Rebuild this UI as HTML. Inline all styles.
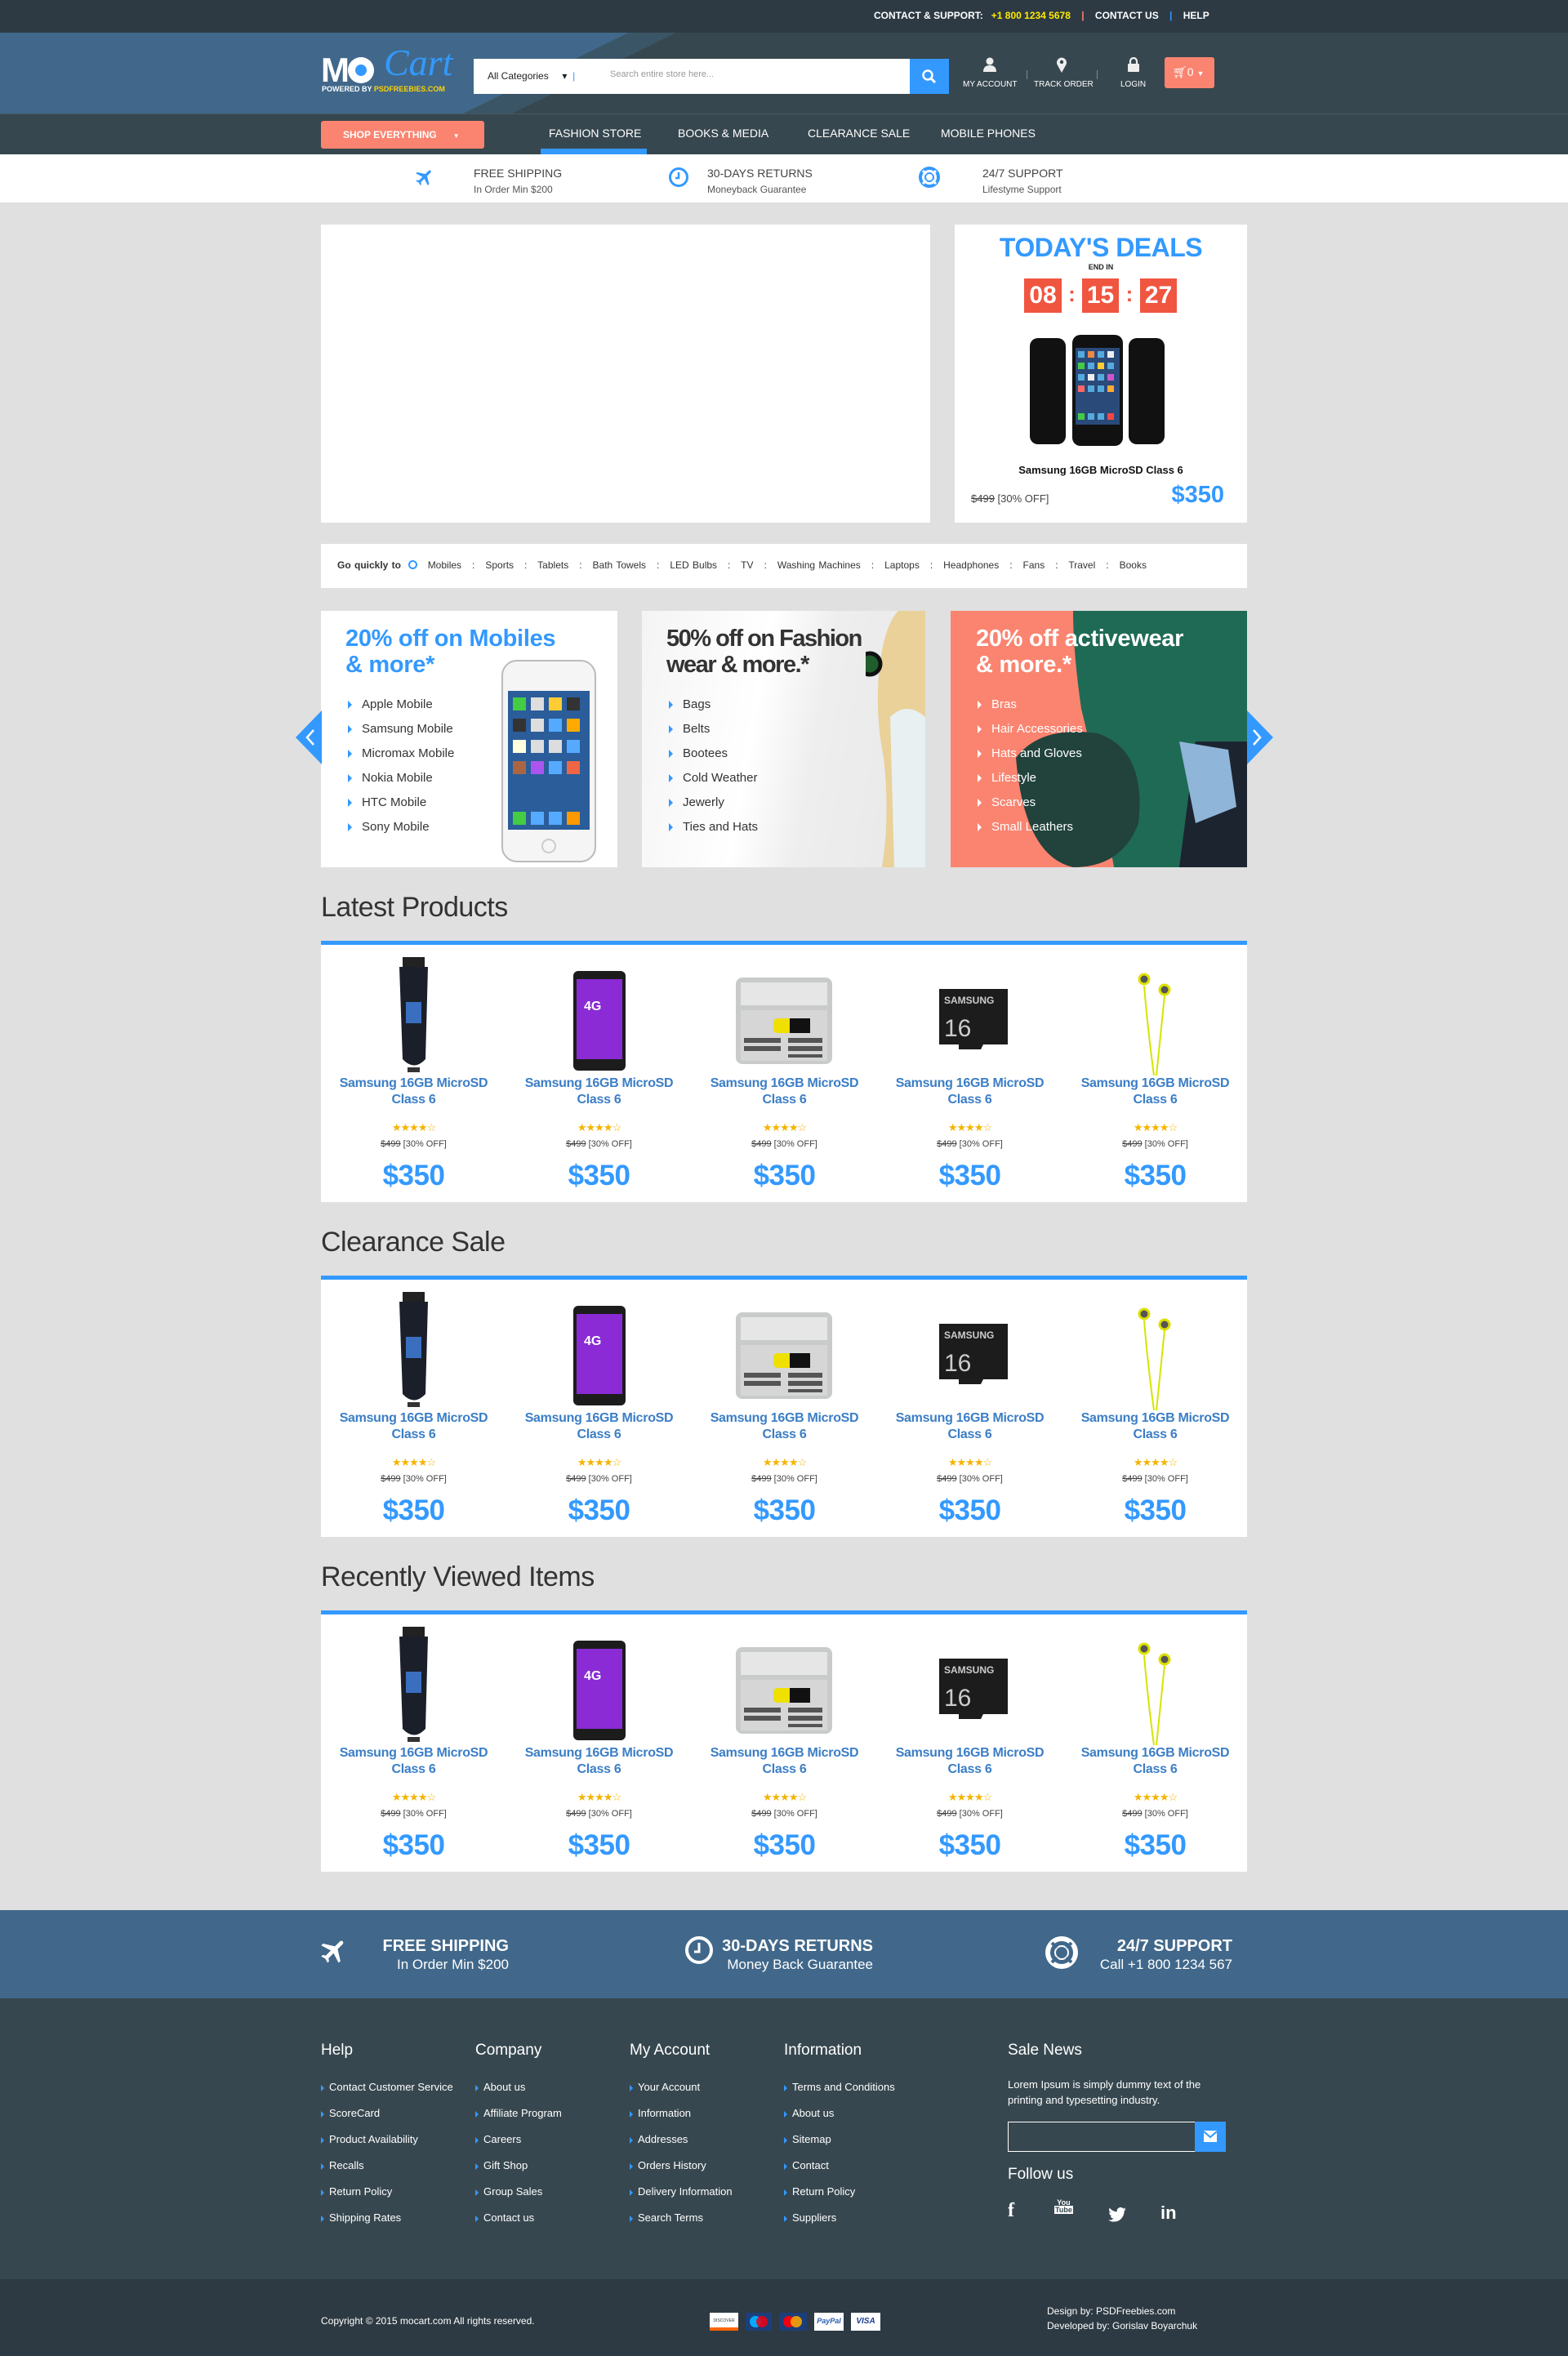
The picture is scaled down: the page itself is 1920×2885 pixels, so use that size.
<!DOCTYPE html>
<html><head><meta charset="utf-8">
<style>
*{margin:0;padding:0;box-sizing:border-box}
body{width:1920px;height:2885px;position:relative;background:#e0e0e0;font-family:"Liberation Sans Narrow","Liberation Sans",sans-serif;color:#333;overflow:hidden}
.a{position:absolute}
.w{color:#fff}
.blue{color:#3399ff}
.ctr{text-align:center}
.box{background:#fff}
ul{list-style:none}
.arr{display:inline-block;width:0;height:0;border-top:5px solid transparent;border-bottom:5px solid transparent;border-left:5px solid #3399ff;margin-right:12px;vertical-align:middle}
.prow{position:absolute;left:393px;width:1134px;height:320px;background:#fff;border-top:5px solid #3399ff}
.prow .p{position:absolute;top:0;width:227px;height:315px;text-align:center}
.p .nm{position:absolute;top:160px;left:0;width:227px;font-size:16px;line-height:20px;font-weight:bold;color:#3b7ec6;letter-spacing:-0.3px}
.p .st{position:absolute;top:216px;left:0;width:227px;font-size:13px;color:#f5b400;letter-spacing:-1px}
.p .op{position:absolute;top:238px;left:0;width:227px;font-size:11px;color:#444}
.p .op s{color:#444}
.p .pr{position:absolute;top:263px;left:0;width:227px;font-size:35px;font-weight:bold;color:#3399ff;letter-spacing:-0.5px}
.p .im{position:absolute;left:0;top:10px;width:227px;height:150px}
.stitle{position:absolute;left:393px;font-size:34px;color:#333;font-family:"Liberation Sans",sans-serif;letter-spacing:-0.5px}
.fcol h4{font-weight:normal;font-size:19px;color:#fff;margin-bottom:26px}
.fcol li{font-size:13px;color:#fff;height:32px}
.fcol .arr{border-left-color:#3399ff;margin-right:6px;border-top-width:4px;border-bottom-width:4px;border-left-width:4px}
</style></head><body>

<div class="a" style="left:0;top:0;width:1920px;height:40px;background:#2d3a44"></div>
<div class="a w" style="left:1070px;top:12px;font-size:12px;font-weight:bold;white-space:nowrap">CONTACT &amp; SUPPORT: &nbsp;&nbsp;<span style="color:#ffea00">+1 800 1234 5678</span> &nbsp;&nbsp;&nbsp;<span style="color:#fa8470">|</span>&nbsp;&nbsp;&nbsp; CONTACT US &nbsp;&nbsp;&nbsp;<span style="color:#3399ff">|</span>&nbsp;&nbsp;&nbsp; HELP</div>

<svg class="a" style="left:0;top:40px" width="1920" height="100">
<rect width="1920" height="100" fill="#37474f"/>
<polygon points="0,0 828,0 625,100 0,100" fill="#3a5566"/>
<polygon points="0,0 770,0 565,100 0,100" fill="#41688a"/>
<rect y="99" width="1920" height="1" fill="#4a5a64"/>
</svg>
<div class="a w" style="left:393px;top:62px;font-size:42px;font-weight:bold;font-family:'Liberation Sans',sans-serif;letter-spacing:-2px">M<span style="display:inline-block;width:32px;height:32px;border-radius:50%;background:#fff;position:relative;top:2px"><span style="position:absolute;left:9px;top:9px;width:14px;height:14px;border-radius:50%;background:#3399ff"></span></span></div>
<div class="a" style="left:470px;top:50px;font-size:46px;font-style:italic;color:#3399ff;font-family:'Liberation Serif',serif">Cart</div>
<div class="a w" style="left:394px;top:104px;font-size:9px;font-weight:bold;font-family:'Liberation Sans',sans-serif">POWERED BY <span style="color:#ffd200">PSDFREEBIES.COM</span></div>
<div class="a" style="left:580px;top:72px;width:534px;height:43px;background:#fff"></div>
<div class="a" style="left:597px;top:86px;font-size:12px;color:#222">All Categories &nbsp;&nbsp;&nbsp;&nbsp;&#9662; <span style="color:#3399ff">&nbsp;|</span></div>
<div class="a" style="left:747px;top:85px;font-size:11px;color:#999">Search entire store here...</div>
<div class="a" style="left:1114px;top:72px;width:48px;height:43px;background:#3399ff"></div>
<svg class="a" style="left:1128px;top:84px" width="20" height="20"><circle cx="8" cy="8" r="5.5" stroke="#fff" stroke-width="2.5" fill="none"/><line x1="12" y1="12" x2="17" y2="17" stroke="#fff" stroke-width="3"/></svg>
<svg class="a" style="left:1203px;top:70px" width="18" height="18"><circle cx="9" cy="5" r="4.5" fill="#eee"/><path d="M1 18 Q1 10 9 10 Q17 10 17 18Z" fill="#eee"/></svg>
<svg class="a" style="left:1293px;top:70px" width="14" height="19"><path d="M7 19 L1.5 9 A6 6 0 1 1 12.5 9Z" fill="#eee"/><circle cx="7" cy="6" r="2.2" fill="#37474f"/></svg>
<svg class="a" style="left:1381px;top:70px" width="14" height="18"><path d="M3 8 V5 A4 4 0 0 1 11 5 V8" stroke="#eee" stroke-width="2.2" fill="none"/><rect x="0" y="8" width="14" height="10" rx="1" fill="#eee"/></svg>
<div class="a" style="left:1257px;top:86px;width:1px;height:11px;background:#7a8c96"></div>
<div class="a" style="left:1343px;top:86px;width:1px;height:11px;background:#7a8c96"></div>
<div class="a w" style="left:1179px;top:98px;font-size:10px;font-family:'Liberation Sans',sans-serif">MY ACCOUNT</div>
<div class="a w" style="left:1266px;top:98px;font-size:10px;font-family:'Liberation Sans',sans-serif">TRACK ORDER</div>
<div class="a w" style="left:1372px;top:98px;font-size:10px;font-family:'Liberation Sans',sans-serif">LOGIN</div>
<div class="a w" style="left:1426px;top:70px;width:61px;height:38px;background:#fa8470;border-radius:3px;font-size:14px;padding:10px 0 0 10px">&#x1F6D2;&#xFE0E;0 <span style="font-size:9px">&#9660;</span></div>

<div class="a" style="left:0;top:140px;width:1920px;height:49px;background:#37474f"></div>
<div class="a w" style="left:393px;top:148px;width:200px;height:34px;background:#fa8470;border-radius:3px;font-size:12px;font-weight:bold;padding-top:10px;padding-left:27px">SHOP EVERYTHING &nbsp;&nbsp;&nbsp;&nbsp;&nbsp;<span style="font-size:8px">&#9660;</span></div>
<div class="a w" style="left:672px;top:155px;font-size:14px">FASHION STORE</div>
<div class="a w" style="left:830px;top:155px;font-size:14px">BOOKS &amp; MEDIA</div>
<div class="a w" style="left:989px;top:155px;font-size:14px">CLEARANCE SALE</div>
<div class="a w" style="left:1152px;top:155px;font-size:14px">MOBILE PHONES</div>
<div class="a" style="left:662px;top:182px;width:130px;height:7px;background:#3399ff"></div>

<div class="a" style="left:0;top:189px;width:1920px;height:60px;background:#fff;border-bottom:1px solid #ddd"></div>
<svg class="a" style="left:506px;top:204px" width="28" height="26" viewBox="0 0 24 24"><path d="M21 16v-2l-8-5V3.5c0-.8-.7-1.5-1.5-1.5S10 2.7 10 3.5V9l-8 5v2l8-2.5V19l-2 1.5V22l3.5-1 3.5 1v-1.5L13 19v-5.5z" fill="#3399ff" transform="rotate(45 12 12)"/></svg>
<div class="a" style="left:580px;top:204px;font-size:14px;color:#444">FREE SHIPPING</div>
<div class="a" style="left:580px;top:225px;font-size:12px;color:#555">In Order Min $200</div>
<svg class="a" style="left:818px;top:204px" width="26" height="26"><circle cx="13" cy="13" r="10.5" stroke="#3399ff" stroke-width="3" fill="none"/><path d="M13 7V14H9" stroke="#3399ff" stroke-width="2.5" fill="none"/></svg>
<div class="a" style="left:866px;top:204px;font-size:14px;color:#444">30-DAYS RETURNS</div>
<div class="a" style="left:866px;top:225px;font-size:12px;color:#555">Moneyback Guarantee</div>
<svg class="a" style="left:1124px;top:202px" width="28" height="30"><circle cx="14" cy="15" r="11" stroke="#3399ff" stroke-width="4" fill="none"/><circle cx="14" cy="15" r="5" stroke="#3399ff" stroke-width="2" fill="none"/><path d="M6 7l4 4M22 7l-4 4M6 23l4-4M22 23l-4-4" stroke="#fff" stroke-width="3"/></svg>
<div class="a" style="left:1203px;top:204px;font-size:14px;color:#444">24/7 SUPPORT</div>
<div class="a" style="left:1203px;top:225px;font-size:12px;color:#555">Lifestyme Support</div>

<div class="a box" style="left:393px;top:275px;width:746px;height:365px"></div>
<div class="a box" style="left:1169px;top:275px;width:358px;height:365px"></div>
<div class="a ctr" style="left:1169px;top:285px;width:358px;font-size:32px;font-weight:bold;color:#3399ff;letter-spacing:-0.5px">TODAY'S DEALS</div>
<div class="a ctr" style="left:1169px;top:322px;width:358px;font-size:9px;font-weight:bold;color:#222">END IN</div>
<div class="a w ctr" style="left:1254px;top:341px;width:46px;height:42px;background:#f05540;font-size:30px;font-weight:bold;line-height:42px">08</div>
<div class="a ctr" style="left:1300px;top:345px;width:25px;font-size:26px;font-weight:bold;color:#f05540">:</div>
<div class="a w ctr" style="left:1325px;top:341px;width:45px;height:42px;background:#f05540;font-size:30px;font-weight:bold;line-height:42px">15</div>
<div class="a ctr" style="left:1370px;top:345px;width:26px;font-size:26px;font-weight:bold;color:#f05540">:</div>
<div class="a w ctr" style="left:1396px;top:341px;width:45px;height:42px;background:#f05540;font-size:30px;font-weight:bold;line-height:42px">27</div>
<svg class="a" style="left:1258px;top:408px" width="180" height="140">
<rect x="3" y="6" width="44" height="130" rx="10" fill="#111"/><rect x="124" y="6" width="44" height="130" rx="10" fill="#111"/>
<rect x="55" y="2" width="62" height="136" rx="10" fill="#111"/><rect x="59" y="18" width="54" height="94" fill="#2a4a7a"/>
<g fill="#5ad">
<rect x="62" y="22" width="8" height="8"/><rect x="74" y="22" width="8" height="8" fill="#e84"/><rect x="86" y="22" width="8" height="8"/><rect x="98" y="22" width="8" height="8" fill="#eee"/>
<rect x="62" y="36" width="8" height="8" fill="#4c4"/><rect x="74" y="36" width="8" height="8"/><rect x="86" y="36" width="8" height="8" fill="#fc3"/><rect x="98" y="36" width="8" height="8"/>
<rect x="62" y="50" width="8" height="8"/><rect x="74" y="50" width="8" height="8" fill="#eee"/><rect x="86" y="50" width="8" height="8"/><rect x="98" y="50" width="8" height="8" fill="#c5c"/>
<rect x="62" y="64" width="8" height="8" fill="#f66"/><rect x="74" y="64" width="8" height="8"/><rect x="86" y="64" width="8" height="8"/><rect x="98" y="64" width="8" height="8" fill="#fa3"/>
<rect x="62" y="98" width="8" height="8" fill="#4c4"/><rect x="74" y="98" width="8" height="8"/><rect x="86" y="98" width="8" height="8"/><rect x="98" y="98" width="8" height="8" fill="#f44"/>
</g></svg>
<div class="a ctr" style="left:1169px;top:568px;width:358px;font-size:13px;font-weight:bold;color:#111">Samsung 16GB MicroSD Class 6</div>
<div class="a" style="left:1189px;top:603px;font-size:13px;color:#444"><s>$499</s> [30% OFF]</div>
<div class="a" style="left:1420px;top:590px;width:79px;text-align:right;font-size:29px;font-weight:bold;color:#3399ff">$350</div>

<div class="a box" style="left:393px;top:666px;width:1134px;height:54px"></div>
<div class="a" style="left:413px;top:685px;font-size:12px;color:#333;white-space:nowrap;word-spacing:1px"><b>Go quickly to</b> &nbsp;<span style="display:inline-block;width:11px;height:11px;border-radius:50%;border:2px solid #3399ff;vertical-align:-1px"></span>&nbsp;&nbsp; Mobiles &nbsp;&nbsp;:&nbsp;&nbsp; Sports &nbsp;&nbsp;:&nbsp;&nbsp; Tablets &nbsp;&nbsp;:&nbsp;&nbsp; Bath Towels &nbsp;&nbsp;:&nbsp;&nbsp; LED Bulbs &nbsp;&nbsp;:&nbsp;&nbsp; TV &nbsp;&nbsp;:&nbsp;&nbsp; Washing Machines &nbsp;&nbsp;:&nbsp;&nbsp; Laptops &nbsp;&nbsp;:&nbsp;&nbsp; Headphones &nbsp;&nbsp;:&nbsp;&nbsp; Fans &nbsp;&nbsp;:&nbsp;&nbsp; Travel &nbsp;&nbsp;:&nbsp;&nbsp; Books</div>

<div class="a box" style="left:393px;top:748px;width:363px;height:314px"></div>
<div class="a" style="left:423px;top:766px;font-size:29px;line-height:32px;font-weight:bold;color:#3399ff;letter-spacing:-0.3px">20% off on Mobiles<br>&amp; more*</div>
<svg class="a" style="left:614px;top:808px" width="116" height="250"><rect x="1" y="1" width="114" height="246" rx="18" fill="#f5f5f5" stroke="#bbb" stroke-width="2"/><rect x="8" y="38" width="100" height="170" fill="#2a5d9a"/><g fill="#ddd"><rect x="14" y="46" width="16" height="16" fill="#4c4"/><rect x="36" y="46" width="16" height="16"/><rect x="58" y="46" width="16" height="16" fill="#fc3"/><rect x="80" y="46" width="16" height="16" fill="#333"/><rect x="14" y="72" width="16" height="16" fill="#333"/><rect x="36" y="72" width="16" height="16"/><rect x="58" y="72" width="16" height="16" fill="#5af"/><rect x="80" y="72" width="16" height="16" fill="#fa0"/><rect x="14" y="98" width="16" height="16" fill="#ffd"/><rect x="36" y="98" width="16" height="16"/><rect x="58" y="98" width="16" height="16"/><rect x="80" y="98" width="16" height="16" fill="#5af"/><rect x="14" y="124" width="16" height="16" fill="#a64"/><rect x="36" y="124" width="16" height="16" fill="#a5e"/><rect x="58" y="124" width="16" height="16" fill="#5af"/><rect x="80" y="124" width="16" height="16" fill="#e64"/><rect x="14" y="186" width="16" height="16" fill="#4c4"/><rect x="36" y="186" width="16" height="16" fill="#5af"/><rect x="58" y="186" width="16" height="16" fill="#5af"/><rect x="80" y="186" width="16" height="16" fill="#f90"/></g><circle cx="58" cy="228" r="8" fill="none" stroke="#ccc" stroke-width="2"/></svg>
<ul class="a" style="left:426px;top:848px;font-size:15px;line-height:30px;color:#333">
<li><span class="arr"></span>Apple Mobile</li><li><span class="arr"></span>Samsung Mobile</li><li><span class="arr"></span>Micromax Mobile</li><li><span class="arr"></span>Nokia Mobile</li><li><span class="arr"></span>HTC Mobile</li><li><span class="arr"></span>Sony Mobile</li></ul>

<div class="a" style="left:786px;top:748px;width:347px;height:314px;background:linear-gradient(100deg,#f4f4f4 0%,#fff 40%,#eee 60%,#e8e8e8 100%)"></div>
<svg class="a" style="left:1060px;top:748px" width="73" height="314"><path d="M40 0 H73 V314 H20 Q30 250 22 180 Q10 120 18 60 Q25 15 40 0Z" fill="#e9d199"/><path d="M30 130 Q50 110 73 130 V314 H35Z" fill="#e8f0f2"/><circle cx="5" cy="65" r="13" fill="#1f5e2c" stroke="#111" stroke-width="5"/></svg>
<div class="a" style="left:816px;top:766px;font-size:29px;line-height:32px;font-weight:bold;color:#333;letter-spacing:-1.5px">50% off on Fashion<br>wear &amp; more.*</div>
<ul class="a" style="left:819px;top:848px;font-size:15px;line-height:30px;color:#333">
<li><span class="arr"></span>Bags</li><li><span class="arr"></span>Belts</li><li><span class="arr"></span>Bootees</li><li><span class="arr"></span>Cold Weather</li><li><span class="arr"></span>Jewerly</li><li><span class="arr"></span>Ties and Hats</li></ul>

<div class="a" style="left:1164px;top:748px;width:363px;height:314px;background:#fa8470;overflow:hidden">
<svg width="363" height="314"><path d="M150 0 H363 V314 H200 Q180 200 160 120 Q150 50 150 0Z" fill="#1f6a55"/><path d="M300 160 H363 V314 H280Z" fill="#1c2430"/><path d="M280 160 L340 170 L350 240 L300 260Z" fill="#8fb5d8"/><path d="M80 180 Q110 140 180 150 Q240 170 230 260 Q210 314 150 314 Q90 300 80 180Z" fill="#21433c"/></svg></div>
<div class="a w" style="left:1195px;top:766px;font-size:29px;line-height:32px;font-weight:bold;letter-spacing:-0.3px">20% off activewear<br>&amp; more.*</div>
<ul class="a w" style="left:1197px;top:848px;font-size:15px;line-height:30px">
<li><span class="arr" style="border-left-color:#fff"></span>Bras</li><li><span class="arr" style="border-left-color:#fff"></span>Hair Accessories</li><li><span class="arr" style="border-left-color:#fff"></span>Hats and Gloves</li><li><span class="arr" style="border-left-color:#fff"></span>Lifestyle</li><li><span class="arr" style="border-left-color:#fff"></span>Scarves</li><li><span class="arr" style="border-left-color:#fff"></span>Small Leathers</li></ul>
<svg class="a" style="left:362px;top:870px" width="32" height="66"><path d="M32 0 L0 33 L32 66Z" fill="#3399ff"/><path d="M22 24 L14 33 L22 42" stroke="#fff" stroke-width="2.5" fill="none"/></svg>
<svg class="a" style="left:1527px;top:870px" width="32" height="66"><path d="M0 0 L32 33 L0 66Z" fill="#3399ff"/><path d="M8 24 L16 33 L8 42" stroke="#fff" stroke-width="2.5" fill="none"/></svg>

<svg width="0" height="0" style="position:absolute">
<defs>
<g id="i1"><rect x="100" y="5" width="27" height="12" fill="#222"/><path d="M96 17 H131 L128 130 Q114 145 100 130Z" fill="#1b1f2a"/><rect x="104" y="60" width="19" height="26" fill="#3a6fc0"/><rect x="106" y="140" width="15" height="6" fill="#333"/></g>
<g id="i2"><rect x="82" y="22" width="64" height="122" rx="6" fill="#1c1c1c"/><rect x="86" y="32" width="56" height="98" fill="#8a2bd6"/><text x="95" y="70" fill="#fff" font-size="16" font-weight="bold" font-family="Liberation Sans">4G</text></g>
<g id="i3"><rect x="54" y="30" width="118" height="106" rx="8" fill="#c9cbcb"/><rect x="60" y="36" width="106" height="28" fill="#e6e6e6"/><rect x="60" y="70" width="106" height="62" fill="#d6d6d6"/><rect x="100" y="80" width="45" height="18" rx="5" fill="#f0e000"/><rect x="120" y="80" width="25" height="18" fill="#111"/><g fill="#555"><rect x="64" y="104" width="45" height="6"/><rect x="64" y="114" width="45" height="6"/><rect x="118" y="104" width="42" height="6"/><rect x="118" y="114" width="42" height="6"/><rect x="118" y="124" width="42" height="4"/></g></g>
<g id="i4"><path d="M76 44 H160 V112 H130 L127 118 H100 V112 H76Z" fill="#1c1c1c"/><text x="82" y="62" fill="#ccc" font-size="12" font-weight="bold" font-family="Liberation Sans">SAMSUNG</text><text x="82" y="102" fill="#ccc" font-size="30" font-family="Liberation Sans">16</text></g>
<g id="i5"><circle cx="100" cy="32" r="6" fill="#555" stroke="#dde000" stroke-width="3"/><circle cx="125" cy="45" r="6" fill="#555" stroke="#dde000" stroke-width="3"/><path d="M100 40 Q104 90 112 150 M125 52 Q120 100 115 150" stroke="#d6e400" stroke-width="2" fill="none"/></g>
</defs></svg>

<div class="stitle" style="top:1092px">Latest Products</div>
<div class="prow" style="top:1152px">
<div class="p" style="left:0"><svg class="im" viewBox="0 0 227 150"><use href="#i1"/></svg><div class="nm">Samsung 16GB MicroSD<br>Class 6</div><div class="st">★★★★☆</div><div class="op"><s>$499</s> [30% OFF]</div><div class="pr">$350</div></div>
<div class="p" style="left:227px"><svg class="im" viewBox="0 0 227 150"><use href="#i2"/></svg><div class="nm">Samsung 16GB MicroSD<br>Class 6</div><div class="st">★★★★☆</div><div class="op"><s>$499</s> [30% OFF]</div><div class="pr">$350</div></div>
<div class="p" style="left:454px"><svg class="im" viewBox="0 0 227 150"><use href="#i3"/></svg><div class="nm">Samsung 16GB MicroSD<br>Class 6</div><div class="st">★★★★☆</div><div class="op"><s>$499</s> [30% OFF]</div><div class="pr">$350</div></div>
<div class="p" style="left:681px"><svg class="im" viewBox="0 0 227 150"><use href="#i4"/></svg><div class="nm">Samsung 16GB MicroSD<br>Class 6</div><div class="st">★★★★☆</div><div class="op"><s>$499</s> [30% OFF]</div><div class="pr">$350</div></div>
<div class="p" style="left:908px"><svg class="im" viewBox="0 0 227 150"><use href="#i5"/></svg><div class="nm">Samsung 16GB MicroSD<br>Class 6</div><div class="st">★★★★☆</div><div class="op"><s>$499</s> [30% OFF]</div><div class="pr">$350</div></div>
</div>

<div class="stitle" style="top:1502px">Clearance Sale</div>
<div class="prow" style="top:1562px">
<div class="p" style="left:0"><svg class="im" viewBox="0 0 227 150"><use href="#i1"/></svg><div class="nm">Samsung 16GB MicroSD<br>Class 6</div><div class="st">★★★★☆</div><div class="op"><s>$499</s> [30% OFF]</div><div class="pr">$350</div></div>
<div class="p" style="left:227px"><svg class="im" viewBox="0 0 227 150"><use href="#i2"/></svg><div class="nm">Samsung 16GB MicroSD<br>Class 6</div><div class="st">★★★★☆</div><div class="op"><s>$499</s> [30% OFF]</div><div class="pr">$350</div></div>
<div class="p" style="left:454px"><svg class="im" viewBox="0 0 227 150"><use href="#i3"/></svg><div class="nm">Samsung 16GB MicroSD<br>Class 6</div><div class="st">★★★★☆</div><div class="op"><s>$499</s> [30% OFF]</div><div class="pr">$350</div></div>
<div class="p" style="left:681px"><svg class="im" viewBox="0 0 227 150"><use href="#i4"/></svg><div class="nm">Samsung 16GB MicroSD<br>Class 6</div><div class="st">★★★★☆</div><div class="op"><s>$499</s> [30% OFF]</div><div class="pr">$350</div></div>
<div class="p" style="left:908px"><svg class="im" viewBox="0 0 227 150"><use href="#i5"/></svg><div class="nm">Samsung 16GB MicroSD<br>Class 6</div><div class="st">★★★★☆</div><div class="op"><s>$499</s> [30% OFF]</div><div class="pr">$350</div></div>
</div>

<div class="stitle" style="top:1912px">Recently Viewed Items</div>
<div class="prow" style="top:1972px">
<div class="p" style="left:0"><svg class="im" viewBox="0 0 227 150"><use href="#i1"/></svg><div class="nm">Samsung 16GB MicroSD<br>Class 6</div><div class="st">★★★★☆</div><div class="op"><s>$499</s> [30% OFF]</div><div class="pr">$350</div></div>
<div class="p" style="left:227px"><svg class="im" viewBox="0 0 227 150"><use href="#i2"/></svg><div class="nm">Samsung 16GB MicroSD<br>Class 6</div><div class="st">★★★★☆</div><div class="op"><s>$499</s> [30% OFF]</div><div class="pr">$350</div></div>
<div class="p" style="left:454px"><svg class="im" viewBox="0 0 227 150"><use href="#i3"/></svg><div class="nm">Samsung 16GB MicroSD<br>Class 6</div><div class="st">★★★★☆</div><div class="op"><s>$499</s> [30% OFF]</div><div class="pr">$350</div></div>
<div class="p" style="left:681px"><svg class="im" viewBox="0 0 227 150"><use href="#i4"/></svg><div class="nm">Samsung 16GB MicroSD<br>Class 6</div><div class="st">★★★★☆</div><div class="op"><s>$499</s> [30% OFF]</div><div class="pr">$350</div></div>
<div class="p" style="left:908px"><svg class="im" viewBox="0 0 227 150"><use href="#i5"/></svg><div class="nm">Samsung 16GB MicroSD<br>Class 6</div><div class="st">★★★★☆</div><div class="op"><s>$499</s> [30% OFF]</div><div class="pr">$350</div></div>
</div>

<div class="a" style="left:0;top:2339px;width:1920px;height:108px;background:#41688a"></div>
<svg class="a" style="left:390px;top:2370px" width="38" height="38" viewBox="0 0 24 24"><path d="M21 16v-2l-8-5V3.5c0-.8-.7-1.5-1.5-1.5S10 2.7 10 3.5V9l-8 5v2l8-2.5V19l-2 1.5V22l3.5-1 3.5 1v-1.5L13 19v-5.5z" fill="#fff" transform="rotate(45 12 12)"/></svg>
<div class="a w" style="left:420px;top:2372px;width:203px;text-align:right;font-size:20px;font-weight:bold;line-height:22px">FREE SHIPPING<br><span style="font-weight:normal;font-size:17px">In Order Min $200</span></div>
<svg class="a" style="left:838px;top:2370px" width="36" height="36"><circle cx="18" cy="18" r="15" stroke="#fff" stroke-width="4" fill="none"/><path d="M18 9V20H12" stroke="#fff" stroke-width="3" fill="none"/></svg>
<div class="a w" style="left:860px;top:2372px;width:209px;text-align:right;font-size:20px;font-weight:bold;line-height:22px">30-DAYS RETURNS<br><span style="font-weight:normal;font-size:17px">Money Back Guarantee</span></div>
<svg class="a" style="left:1278px;top:2369px" width="44" height="44"><circle cx="22" cy="22" r="17" stroke="#fff" stroke-width="6" fill="none"/><circle cx="22" cy="22" r="8" stroke="#fff" stroke-width="2" fill="none"/><path d="M10 10l6 6M34 10l-6 6M10 34l6-6M34 34l-6-6" stroke="#41688a" stroke-width="4"/></svg>
<div class="a w" style="left:1300px;top:2372px;width:209px;text-align:right;font-size:20px;font-weight:bold;line-height:22px">24/7 SUPPORT<br><span style="font-weight:normal;font-size:17px">Call +1 800 1234 567</span></div>

<div class="a" style="left:0;top:2447px;width:1920px;height:344px;background:#37474f"></div>
<div class="a fcol" style="left:393px;top:2500px"><h4>Help</h4><ul><li><span class="arr"></span>Contact Customer Service</li><li><span class="arr"></span>ScoreCard</li><li><span class="arr"></span>Product Availability</li><li><span class="arr"></span>Recalls</li><li><span class="arr"></span>Return Policy</li><li><span class="arr"></span>Shipping Rates</li></ul></div>
<div class="a fcol" style="left:582px;top:2500px"><h4>Company</h4><ul><li><span class="arr"></span>About us</li><li><span class="arr"></span>Affiliate Program</li><li><span class="arr"></span>Careers</li><li><span class="arr"></span>Gift Shop</li><li><span class="arr"></span>Group Sales</li><li><span class="arr"></span>Contact us</li></ul></div>
<div class="a fcol" style="left:771px;top:2500px"><h4>My Account</h4><ul><li><span class="arr"></span>Your Account</li><li><span class="arr"></span>Information</li><li><span class="arr"></span>Addresses</li><li><span class="arr"></span>Orders History</li><li><span class="arr"></span>Delivery Information</li><li><span class="arr"></span>Search Terms</li></ul></div>
<div class="a fcol" style="left:960px;top:2500px"><h4>Information</h4><ul><li><span class="arr"></span>Terms and Conditions</li><li><span class="arr"></span>About us</li><li><span class="arr"></span>Sitemap</li><li><span class="arr"></span>Contact</li><li><span class="arr"></span>Return Policy</li><li><span class="arr"></span>Suppliers</li></ul></div>
<div class="a fcol" style="left:1234px;top:2500px"><h4>Sale News</h4></div>
<div class="a w" style="left:1234px;top:2543px;font-size:13px;line-height:19px">Lorem Ipsum is simply dummy text of the<br>printing and typesetting industry.</div>
<div class="a" style="left:1234px;top:2598px;width:230px;height:37px;border:1px solid #fff"></div>
<div class="a" style="left:1463px;top:2598px;width:38px;height:37px;background:#3399ff"></div>
<svg class="a" style="left:1474px;top:2609px" width="16" height="14"><rect width="16" height="14" fill="#fff"/><path d="M0 1 L8 8 L16 1" stroke="#3399ff" stroke-width="2" fill="none"/></svg>
<div class="a w" style="left:1234px;top:2652px;font-size:19px">Follow us</div>
<div class="a w" style="left:1234px;top:2694px;font-size:24px;font-weight:bold;font-family:'Liberation Serif',serif">f</div>
<div class="a w" style="left:1291px;top:2693px;font-size:9px;line-height:9px;text-align:center;font-weight:bold">You<br><span style="background:#fff;color:#37474f;padding:0 1px">Tube</span></div>
<svg class="a" style="left:1357px;top:2703px" width="22" height="18" viewBox="0 0 24 20"><path d="M24 2.4a10 10 0 0 1-2.8.8A5 5 0 0 0 23.3.4a10 10 0 0 1-3.1 1.2A4.9 4.9 0 0 0 11.8 6 14 14 0 0 1 1.7.9a4.9 4.9 0 0 0 1.5 6.6A5 5 0 0 1 1 6.9a4.9 4.9 0 0 0 3.9 4.8 5 5 0 0 1-2.2.1 4.9 4.9 0 0 0 4.6 3.4A9.9 9.9 0 0 1 0 17.300 14 14 0 0 0 7.5 19.5c9 0 14-7.5 14-14v-.6A10 10 0 0 0 24 2.4z" fill="#fff"/></svg>
<div class="a w" style="left:1421px;top:2697px;font-size:22px;font-weight:bold">in</div>

<div class="a" style="left:0;top:2791px;width:1920px;height:94px;background:#2d3a43"></div>
<div class="a w" style="left:393px;top:2835px;font-size:12px">Copyright © 2015 mocart.com All rights reserved.</div>
<div class="a" style="left:869px;top:2832px;width:35px;height:22px;background:#fff;font-size:5px;color:#333;padding-top:7px;text-align:center;border-bottom:4px solid #f60">DISCOVER</div>
<div class="a" style="left:913px;top:2832px;width:32px;height:22px;background:#1c3e7a"><span style="position:absolute;left:5px;top:4px;width:14px;height:14px;border-radius:50%;background:#0af"></span><span style="position:absolute;left:13px;top:4px;width:14px;height:14px;border-radius:50%;background:#e01;opacity:.85"></span></div>
<div class="a" style="left:954px;top:2832px;width:34px;height:22px;background:#1c3e7a"><span style="position:absolute;left:5px;top:4px;width:14px;height:14px;border-radius:50%;background:#e01"></span><span style="position:absolute;left:14px;top:4px;width:14px;height:14px;border-radius:50%;background:#fa0;opacity:.85"></span></div>
<div class="a" style="left:997px;top:2832px;width:36px;height:22px;background:#fff;font-size:9px;font-style:italic;font-weight:bold;color:#2a5cad;text-align:center;padding-top:5px">PayPal</div>
<div class="a" style="left:1042px;top:2832px;width:36px;height:22px;background:#fff;font-size:10px;font-style:italic;font-weight:bold;color:#1a3f8f;text-align:center;padding-top:5px">VISA</div>
<div class="a w" style="left:1282px;top:2821px;font-size:12px;line-height:18px">Design by: PSDFreebies.com<br>Developed by: Gorislav Boyarchuk</div>
</body></html>
